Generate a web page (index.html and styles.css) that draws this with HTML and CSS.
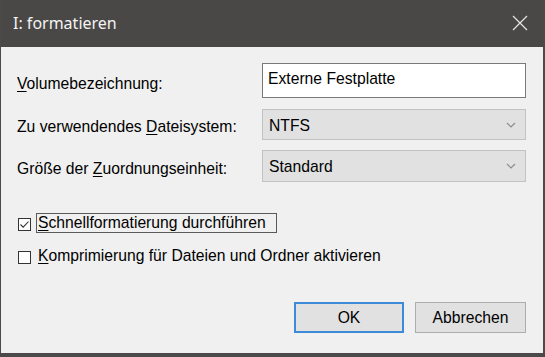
FILE: index.html
```html
<!DOCTYPE html>
<html lang="de">
<head>
<meta charset="utf-8">
<title>I: formatieren</title>
<link rel="stylesheet" href="styles.css">
</head>
<body>
<div class="window">
  <div class="titlebar">
    <span class="title">I: formatieren</span>
    <span class="close">
      <svg width="16" height="16" viewBox="0 0 16 16"><path d="M1 1L15 15M15 1L1 15" stroke="#e6e6e6" stroke-width="1.2" fill="none"/></svg>
    </span>
  </div>
  <div class="content">
    <div class="fields">
      <div class="label"><u>V</u>olumebezeichnung:</div>
      <div class="input">Externe Festplatte</div>
      <div class="label">Zu verwendendes <u>D</u>ateisystem:</div>
      <div class="select s1"><span>NTFS</span>
        <svg width="10" height="6" viewBox="0 0 10 6"><path d="M1 1L5 5L9 1" stroke="#8c8c8c" stroke-width="1.2" fill="none"/></svg>
      </div>
      <div class="label">Größe der <u>Z</u>uordnungseinheit:</div>
      <div class="select s2"><span>Standard</span>
        <svg width="10" height="6" viewBox="0 0 10 6"><path d="M1 1L5 5L9 1" stroke="#8c8c8c" stroke-width="1.2" fill="none"/></svg>
      </div>
    </div>
    <div class="options">
      <div class="option">
        <span class="box"><svg width="11" height="11" viewBox="0 0 11 11"><path d="M1.5 5.5L4.2 8.2L9.5 2.5" stroke="#333" stroke-width="1.1" fill="none"/></svg></span>
        <span class="text focus"><u>S</u>chnellformatierung durchführen</span>
      </div>
      <div class="option">
        <span class="box"></span>
        <span class="text"><u>K</u>omprimierung für Dateien und Ordner aktivieren</span>
      </div>
    </div>
    <div class="footer">
      <div class="btn default">OK</div>
      <div class="btn">Abbrechen</div>
    </div>
  </div>
</div>
</body>
</html>
```

FILE: styles.css
```css
html, body {
  margin: 0;
  padding: 0;
}
body {
  width: 545px;
  height: 357px;
  overflow: hidden;
  background: #f0f0f0;
}
.window {
  width: 545px;
  height: 357px;
  box-sizing: border-box;
  border-left: 1px solid #4a4a4a;
  border-right: 2px solid #4a4a4a;
  border-bottom: 4px solid #4a4a4a;
  background: #f0f0f0;
  display: flex;
  flex-direction: column;
  font-family: "Liberation Sans", Arial, sans-serif;
  font-size: 15.7px;
  color: #000;
}
.titlebar {
  height: 47px;
  flex: none;
  background: #4a4846;
  display: flex;
  align-items: center;
  justify-content: space-between;
  padding: 0 15px 0 12px;
}
.title {
  font-family: "Noto Sans", "Open Sans", sans-serif;
  font-size: 16px;
  color: #f4f4f4;
  margin-top: -1px;
}
.close {
  display: flex;
  margin-top: -1px;
}
.content {
  flex: 1;
  display: flex;
  flex-direction: column;
  padding: 16px 17px 20px 16px;
}
.fields {
  display: grid;
  grid-template-columns: 245px 264px;
  row-gap: 10px;
  align-items: center;
}
.label {
  padding-top: 6px;
  white-space: nowrap;
}
.input {
  height: 35px;
  box-sizing: border-box;
  background: #fff;
  border: 1px solid #7a7a7a;
  padding: 0 6px 3px 5px;
  display: flex;
  align-items: center;
}
.select {
  box-sizing: border-box;
  background: #e1e1e1;
  border: 1px solid #c2c2c2;
  padding: 0 9px 0 6px;
  display: flex;
  align-items: center;
  justify-content: space-between;
}
.s1 { height: 31px; margin-top: 1px; }
.s2 { height: 32px; }
.select span { padding-top: 2px; }
.options {
  margin-top: 31px;
  display: flex;
  flex-direction: column;
  gap: 13px;
}
.option {
  display: flex;
  align-items: center;
  height: 20px;
}
.box {
  width: 13px;
  height: 13px;
  box-sizing: border-box;
  border: 1px solid #333;
  background: #fff;
  margin-left: 1px;
  margin-top: 3px;
  display: flex;
  align-items: center;
  justify-content: center;
}
.text {
  margin-left: 5px;
  height: 20px;
  box-sizing: border-box;
  padding: 0 10px 0 1px;
  display: flex;
  align-items: center;
  white-space: nowrap;
  border: 1px solid transparent;
}
.text.focus {
  border-color: #5a5a5a;
}
.footer {
  margin-top: auto;
  display: flex;
  justify-content: flex-end;
  gap: 11px;
}
.btn {
  width: 111px;
  height: 31px;
  box-sizing: border-box;
  background: #e1e1e1;
  border: 1px solid #adadad;
  display: flex;
  align-items: center;
  justify-content: center;
}
.btn.default {
  border: 2px solid #3c8ad8;
  width: 110px;
}
u {
  text-decoration: underline;
  text-underline-offset: 2px;
}
```
